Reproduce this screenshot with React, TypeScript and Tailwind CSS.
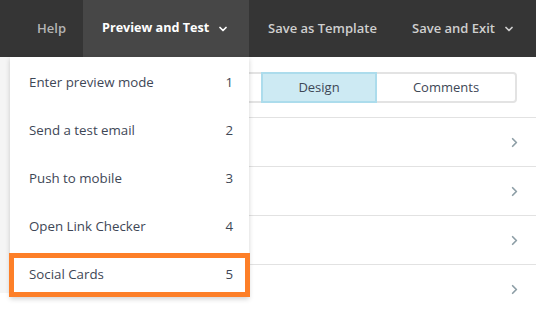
import React from "react";
import { ChevronDown, ChevronRight } from "lucide-react";

const MENU = [
  { label: "Enter preview mode", key: "1" },
  { label: "Send a test email", key: "2" },
  { label: "Push to mobile", key: "3" },
  { label: "Open Link Checker", key: "4" },
  { label: "Social Cards", key: "5" },
];

export default function App() {
  return (
    <div className="relative w-[536px] h-[318px] overflow-hidden bg-white font-['Open_Sans',sans-serif]">
      {/* top bar */}
      <div className="flex h-[57px] bg-[#353535] text-[13px] font-semibold">
        <div className="flex items-center w-[83px] pl-[37px] text-[#b4b4b4]">Help</div>
        <div className="flex items-center w-[166px] pl-[19px] gap-[8px] bg-[#474747] text-white font-bold text-[12.6px]">
          Preview and Test
          <ChevronDown size={12} strokeWidth={3.5} />
        </div>
        <div className="flex items-center w-[144px] pl-[19px] text-[#cfcfcf]">Save as Template</div>
        <div className="flex items-center pl-[19px] gap-[8px] text-[#cfcfcf]">
          Save and Exit
          <ChevronDown size={12} strokeWidth={3.5} />
        </div>
      </div>

      {/* page under the menu */}
      <div className="flex">
        <div className="w-[130px] h-[236px] bg-[#f5f5f5]" />
        <div className="flex-1 flex flex-col">
          <div className="flex ml-[15px] mr-[19px] mt-[15px] mb-[14px] h-[31px] border-2 border-[#e3e3e3] rounded-[4px] text-[13px] text-[#3e4756]">
            <div className="w-[114px]" />
            <div className="w-[116px] flex items-center justify-center bg-[#cdeaf3] border-2 border-[#acdcec] -my-[2px]">
              Design
            </div>
            <div className="flex-1 flex items-center justify-center">Comments</div>
          </div>
          {[0, 1, 2, 3].map((i) => (
            <div
              key={i}
              className="h-[49px] border-t border-[#e2e2e2] flex items-center justify-end pr-[14px] text-[#8d9ea6]"
            >
              <ChevronRight size={15} strokeWidth={2.75} />
            </div>
          ))}
        </div>
      </div>

      {/* dropdown */}
      <div className="absolute left-[10px] top-[57px] w-[239px] bg-white shadow-[0_2px_5px_rgba(0,0,0,0.18)] text-[13.3px] text-[#3e4756]">
        {MENU.map((m, i) => (
          <div key={m.key} className="relative h-[48px] flex items-center justify-between pt-[4px] pl-[19px] pr-[16px]">
            <span>{m.label}</span>
            <span>{m.key}</span>
            {i === MENU.length - 1 && (
              <span className="absolute left-[-1px] right-[-1px] top-[4px] bottom-0 border-[5px] border-[#fd7f28]" />
            )}
          </div>
        ))}
      </div>
    </div>
  );
}
